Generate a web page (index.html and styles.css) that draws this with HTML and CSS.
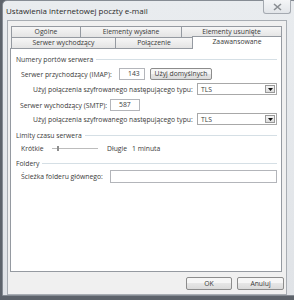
FILE: index.html
```html
<!DOCTYPE html>
<html lang="pl">
<head>
    <meta charset="UTF-8">
    <title>Ustawienia internetowej poczty e-mail</title>
    <link rel="stylesheet" href="styles.css">
</head>
<body>
    <div class="window">
        <div class="titlebar">
            <span class="title">Ustawienia internetowej poczty e-mail</span>
            <div class="close-btn">
                <svg width="9" height="8" viewBox="0 0 9 8"><path d="M1 1 L8 7 M8 1 L1 7" stroke="#8a8d92" stroke-width="1.6" fill="none"/></svg>
            </div>
        </div>
        <div class="client">
            <div class="tab-row first">
                <div class="tab t-ogolne">Ogólne</div>
                <div class="tab t-wyslane">Elementy wysłane</div>
                <div class="tab t-usuniete">Elementy usunięte</div>
            </div>
            <div class="tab-row second">
                <div class="tab t-serwer">Serwer wychodzący</div>
                <div class="tab t-polaczenie">Połączenie</div>
                <div class="tab t-zaaw active">Zaawansowane</div>
            </div>
            <div class="panel">
                <div class="group-head g-first"><span>Numery portów serwera</span><i></i></div>
                <div class="row r-imap">
                    <span class="lbl w-imap">Serwer przychodzący (IMAP):</span>
                    <div class="field f-imap">143</div>
                    <div class="btn btn-def">Użyj domyślnych</div>
                </div>
                <div class="row r-tls1">
                    <span class="lbl sub">Użyj połączenia szyfrowanego następującego typu:</span>
                    <div class="select"><span>TLS</span><b><svg width="5" height="3" viewBox="0 0 5 3"><path d="M0 0 H5 L2.5 3 Z" fill="#111"/></svg></b></div>
                </div>
                <div class="row r-smtp">
                    <span class="lbl w-smtp">Serwer wychodzący (SMTP):</span>
                    <div class="field f-smtp">587</div>
                </div>
                <div class="row r-tls2">
                    <span class="lbl sub">Użyj połączenia szyfrowanego następującego typu:</span>
                    <div class="select"><span>TLS</span><b><svg width="5" height="3" viewBox="0 0 5 3"><path d="M0 0 H5 L2.5 3 Z" fill="#111"/></svg></b></div>
                </div>
                <div class="group-head g-limit"><span>Limity czasu serwera</span><i></i></div>
                <div class="row r-slider">
                    <span class="lbl w-short">Krótkie</span>
                    <div class="slider"><div class="thumb"></div></div>
                    <span class="lbl long">Długie</span>
                    <span class="lbl minute">1 minuta</span>
                </div>
                <div class="group-head g-fold"><span>Foldery</span><i></i></div>
                <div class="row r-path">
                    <span class="lbl w-path">Ścieżka folderu głównego:</span>
                    <div class="field f-path"></div>
                </div>
            </div>
            <div class="buttons">
                <div class="btn btn-ok">OK</div>
                <div class="btn btn-cancel">Anuluj</div>
            </div>
        </div>
    </div>
</body>
</html>
```

FILE: styles.css
```css
body {
    margin: 0;
    width: 294px;
    height: 300px;
    overflow: hidden;
    background: #5d636b;
    font-family: "Open Sans", "Noto Sans", sans-serif;
    font-size: 6.8px;
    color: #3a3a3a;
}
.window {
    margin-left: 2px;
    width: 296px;
    height: 296px;
    background: linear-gradient(#e9ecef, #e0e3e7);
    border: 1px solid #868c94;
    border-radius: 5px 5px 0 0;
    box-sizing: border-box;
}
.titlebar {
    height: 19px;
    display: flex;
    justify-content: space-between;
    align-items: flex-start;
}
.title {
    font-size: 8px;
    line-height: 19px;
    margin-left: 3px;
    color: #2a2a2a;
}
.close-btn {
    width: 28px;
    height: 14px;
    margin-right: 6px;
    margin-top: -1px;
    border: 1px solid #a4a9b0;
    border-top: none;
    border-radius: 0 0 3px 3px;
    background: linear-gradient(#f4f5f7, #e2e5e9);
    box-sizing: border-box;
    display: flex;
    align-items: center;
    justify-content: center;
}
.client {
    margin-left: 4px;
    width: 280px;
    height: 275px;
    background: #f0f0f0;
    border: 1px solid #a8adb3;
    box-sizing: border-box;
    padding: 5px 0 0 2px;
}
.tab-row {
    display: flex;
    margin-left: 1px;
    height: 11px;
}
.tab {
    height: 11px;
    border: 1px solid #959aa1;
    border-bottom: none;
    margin-left: -1px;
    box-sizing: border-box;
    background: linear-gradient(#f6f6f6, #e4e4e4);
    text-align: center;
    line-height: 10px;
}
.tab:first-child {
    margin-left: 0;
}
.t-ogolne { width: 70px; }
.t-wyslane { width: 102px; }
.t-usuniete { width: 101px; }
.t-serwer { width: 105px; }
.t-polaczenie { width: 78px; }
.t-zaaw { width: 90px; }
.tab.active {
    background: #fff;
    height: 13px;
    margin-top: -1px;
    margin-bottom: -1px;
    position: relative;
    z-index: 1;
}
.panel {
    width: 272px;
    height: 224px;
    background: #fff;
    border: 1px solid #959aa1;
    box-sizing: border-box;
    padding: 0 4px 0 0;
    display: flex;
    flex-direction: column;
}
.group-head {
    display: flex;
    align-items: center;
    height: 10px;
    padding-left: 5px;
}
.group-head i {
    flex: 1;
    height: 0;
    border-top: 1px solid #d5dfe5;
    margin-left: 3px;
}
.g-first { margin-top: 5px; }
.g-limit { margin-top: 5px; }
.g-fold { margin-top: 5px; }
.row {
    display: flex;
    align-items: center;
}
.lbl {
    white-space: nowrap;
}
.r-imap { margin-top: 4px; height: 12px; padding-left: 10px; }
.r-tls1 { margin-top: 3px; height: 12px; }
.r-smtp { margin-top: 4px; height: 12px; padding-left: 9px; }
.r-tls2 { margin-top: 2px; height: 12px; }
.r-slider { margin-top: 3px; height: 10px; padding-left: 10px; }
.r-path { margin-top: 2px; height: 13px; padding-left: 10px; }
.sub {
    margin-left: 22px;
    flex: 1;
}
.w-imap { width: 98px; }
.w-smtp { width: 90px; }
.w-short { width: 31px; }
.w-path { width: 89px; }
.field {
    height: 100%;
    border: 1px solid #b3b5ba;
    box-sizing: border-box;
    background: #fff;
    padding-left: 8px;
    line-height: 10px;
}
.f-imap { width: 26px; }
.f-smtp { width: 30px; }
.f-path { flex: 1; }
.btn {
    border: 1px solid #8c8c8c;
    border-radius: 2px;
    box-sizing: border-box;
    background: linear-gradient(#f6f6f6 50%, #e6e6e6 50%, #dadada);
    text-align: center;
}
.btn-def {
    width: 62px;
    height: 12px;
    margin-left: 5px;
    line-height: 10px;
}
.select {
    width: 80px;
    height: 12px;
    border: 1px solid #a8a8a8;
    box-sizing: border-box;
    display: flex;
    justify-content: space-between;
    align-items: center;
    padding: 0 1px 0 3px;
}
.select b {
    width: 10px;
    height: 8px;
    border: 1px solid #9a9a9a;
    box-sizing: border-box;
    background: linear-gradient(#f4f4f4, #dcdcdc);
    display: flex;
    align-items: center;
    justify-content: center;
}
.slider {
    width: 46px;
    height: 0;
    border-top: 1px solid #bcbcbc;
    display: flex;
}
.thumb {
    width: 2px;
    height: 5px;
    margin-left: 5px;
    margin-top: -3px;
    background: #8e8e8e;
}
.long { margin-left: 9px; }
.minute { margin-left: 5px; }
.buttons {
    display: flex;
    justify-content: flex-end;
    gap: 5px;
    margin-top: 5px;
    padding-right: 2px;
}
.btn-ok {
    width: 46px;
    height: 13px;
    line-height: 11px;
}
.btn-cancel {
    width: 47px;
    height: 13px;
    line-height: 11px;
}
```
